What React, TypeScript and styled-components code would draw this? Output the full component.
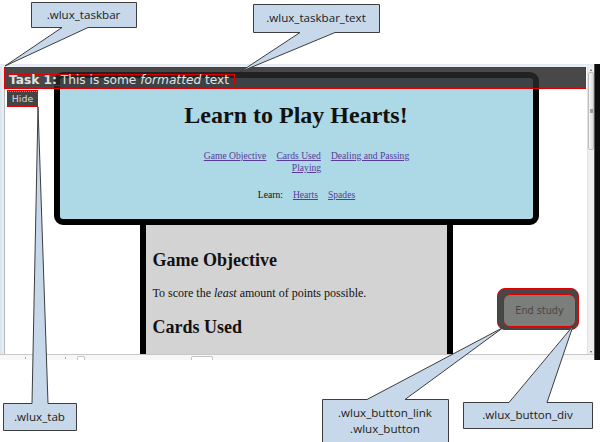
import React from "react";
import styled, { createGlobalStyle } from "styled-components";

const GlobalStyle = createGlobalStyle`
  html, body { margin: 0; padding: 0; background: #fff; }
  body { width: 600px; height: 442px; overflow: hidden; }
  #root { width: 600px; height: 442px; }
  * { box-sizing: border-box; }
`;

const Canvas = styled.div`
  position: relative;
  width: 600px;
  height: 442px;
  background: #fff;
  display: flex;
  flex-direction: column;
  overflow: hidden;
`;

const TopGap = styled.div`
  flex: none;
  height: 64px;
`;

const Frame = styled.div`
  flex: none;
  height: 296px;
  display: flex;
`;

const FrameMain = styled.div`
  flex: 1;
  min-width: 0;
  display: flex;
  flex-direction: column;
`;

const FrameTop = styled.div`
  flex: none;
  height: 3px;
  background: linear-gradient(#e2e8f0, #eef2f7);
`;

const FrameBody = styled.div`
  position: relative;
  flex: 1;
  min-height: 0;
  display: flex;
`;

const LeftEdge = styled.div`
  flex: none;
  width: 5px;
  background: linear-gradient(90deg, #d9e1ea 0, #e9eef4 3px);
  border-right: 1px solid #b3b8be;
`;

const Viewport = styled.div`
  flex: 1;
  min-width: 0;
  overflow: hidden;
  background: #fff;
  padding-top: 5px;
  font-family: "Liberation Serif", "Times New Roman", serif;
  color: #111;
`;

const Scrollbar = styled.div`
  flex: none;
  width: 7px;
  display: flex;
  flex-direction: column;
  background: #efefef;
  border-left: 1px solid #e2e2e2;
`;

const ScrollArrow = styled.div<{ $down?: boolean }>`
  flex: none;
  height: 5px;
  display: flex;
  align-items: center;
  justify-content: center;
  &::after {
    content: "";
    border-left: 1.5px solid transparent;
    border-right: 1.5px solid transparent;
    ${(p) => (p.$down ? "border-top: 2px solid #555;" : "border-bottom: 2px solid #555;")}
  }
`;

const ScrollThumb = styled.div`
  flex: none;
  height: 78px;
  margin: 0 0 0 0;
  border: 1px solid #bdbdbd;
  border-radius: 2px;
  background: linear-gradient(90deg, #f7f7f7, #dcdcdc);
  display: flex;
  align-items: center;
  justify-content: center;
  &::after {
    content: "";
    width: 3px;
    height: 4px;
    background: #9d9d9d;
  }
`;

const ScrollTrack = styled.div`
  flex: 1;
`;

const BlackEdge = styled.div`
  flex: none;
  width: 6px;
  background: #0d0d0d;
  border-left: 1px solid #555;
`;

const StatusStrip = styled.div`
  flex: none;
  height: 6px;
  border-top: 1px solid #c8c8c8;
  background: #f7f7f7;
  display: flex;
  align-items: flex-end;
`;

const StatusMark = styled.div<{ $left: number; $w: number }>`
  flex: none;
  margin-left: ${(p) => p.$left}px;
  width: ${(p) => p.$w}px;
  height: 4px;
  border: 1px solid #c4c4c4;
  border-bottom: none;
  border-radius: 2px 2px 0 0;
  background: #fff;
`;

const StatusDot = styled.div<{ $left: number }>`
  flex: none;
  margin-left: ${(p) => p.$left}px;
  width: 1px;
  height: 2px;
  margin-bottom: 1px;
  background: #aaa;
`;

/* ---------- page content ---------- */

const Header = styled.header`
  width: 485px;
  margin: 0 auto;
  border: 6px solid #000;
  border-radius: 9px;
  background: #add8e6;
  padding: 7px 0 18px;
  text-align: center;
`;

const Title = styled.h1`
  margin: 16px 0 21px;
  font-size: 24px;
  line-height: 28px;
  font-weight: bold;
`;

const NavRow = styled.nav<{ $gapTop?: number }>`
  width: 241px;
  margin: ${(p) => p.$gapTop ?? 0}px auto 0;
  padding-left: 21px;
  display: flex;
  flex-wrap: wrap;
  justify-content: center;
  column-gap: 10px;
  font-size: 9.6px;
  line-height: 12px;
`;

const NavLink = styled.a`
  color: #5a3b9c;
  text-decoration: underline;
  cursor: pointer;
`;

const NavLabel = styled.span`
  color: #111;
`;

const Body = styled.main`
  width: 313px;
  margin: 0 auto;
  border-left: 6px solid #000;
  border-right: 6px solid #000;
  background: #d3d3d3;
  padding: 10px 7px 60px;
`;

const SectionTitle = styled.h2`
  margin: 15px 0;
  font-size: 18px;
  line-height: 21px;
  font-weight: bold;
`;

const Para = styled.p`
  margin: 15px 0 17px;
  font-size: 12px;
  line-height: 14px;
`;

/* ---------- wlux overlay parts ---------- */

const Taskbar = styled.div`
  position: absolute;
  left: 4px;
  top: 0;
  width: 582px;
  height: 22px;
  border: 1px solid #e00000;
  background: rgba(40, 40, 40, 0.85);
  padding: 5px 0 0 2px;
  font-family: "DejaVu Sans", Verdana, sans-serif;
  font-size: 12.2px;
  color: #e2e2e2;
`;

const TaskbarText = styled.span`
  display: inline-block;
  height: 12px;
  line-height: 10px;
  border: 1px solid #e00000;
  padding: 0 5px 0 1px;
  white-space: nowrap;
`;

const Tab = styled.div`
  position: absolute;
  left: 7px;
  top: 23px;
  width: 31px;
  height: 17px;
  border: 1px solid #e00000;
`;

const TabButton = styled.div`
  height: 100%;
  background: #444;
  border-top: 1px dotted #9a9a9a;
  color: #dcdcdc;
  font-family: "DejaVu Sans", Verdana, sans-serif;
  font-size: 9.4px;
  line-height: 13px;
  text-align: center;
`;

const ButtonDiv = styled.div`
  position: absolute;
  left: 497px;
  top: 221px;
  width: 82px;
  height: 42px;
  padding: 5px 2px 2px 5px;
  border: 1px solid #e00000;
  border-radius: 8px;
  background: #474747;
`;

const ButtonLink = styled.a`
  display: flex;
  align-items: center;
  justify-content: center;
  width: 73px;
  height: 33px;
  border: 1px solid #e00000;
  border-radius: 7px;
  background: #7b7e7a;
  color: #474747;
  font-family: "DejaVu Sans", Verdana, sans-serif;
  font-size: 9.7px;
  text-decoration: none;
  cursor: pointer;
`;

/* ---------- callouts ---------- */

const CalloutLayer = styled.svg`
  position: absolute;
  left: 0;
  top: 0;
  width: 600px;
  height: 442px;
  pointer-events: none;
`;

const CalloutLabel = styled.div<{ $x: number; $y: number; $w: number; $h: number }>`
  position: absolute;
  left: ${(p) => p.$x}px;
  top: ${(p) => p.$y}px;
  width: ${(p) => p.$w}px;
  height: ${(p) => p.$h}px;
  display: flex;
  flex-direction: column;
  align-items: center;
  justify-content: center;
  font-family: "Open Sans", "DejaVu Sans", sans-serif;
  font-size: 11.6px;
  line-height: 16px;
  color: #1c1c1c;
  pointer-events: none;
`;

type Callout = {
  box: [number, number, number, number];
  base: [number, number];
  tip: [number, number];
  side: "top" | "bottom";
  lines: string[];
};

const callouts: Callout[] = [
  { box: [31, 2, 136, 27], base: [62, 88], tip: [5, 66], side: "bottom", lines: [".wlux_taskbar"] },
  { box: [253, 4, 379, 32], base: [300, 335], tip: [240, 72], side: "bottom", lines: [".wlux_taskbar_text"] },
  { box: [3, 403, 76, 430], base: [32, 48], tip: [38, 107], side: "top", lines: [".wlux_tab"] },
  { box: [322, 399, 448, 442], base: [367, 405], tip: [504, 327], side: "top", lines: [".wlux_button_link", ".wlux_button"] },
  { box: [463, 402, 592, 428], base: [509, 547], tip: [573, 326], side: "top", lines: [".wlux_button_div"] },
];

function shapePath(c: Callout): string {
  const [x0, y0, x1, y1] = c.box.map((v) => v + 0.5);
  const [b0, b1] = c.base;
  const [tx, ty] = c.tip;
  if (c.side === "bottom") {
    return `M${x0} ${y0}H${x1}V${y1}H${b1}L${tx} ${ty}L${b0} ${y1}H${x0}Z`;
  }
  return `M${x0} ${y0}H${b0}L${tx} ${ty}L${b1} ${y0}H${x1}V${y1}H${x0}Z`;
}

export default function App() {
  return (
    <>
      <GlobalStyle />
      <Canvas>
        <TopGap />
        <Frame>
          <FrameMain>
            <FrameTop />
            <FrameBody>
              <LeftEdge />
              <Viewport>
                <Header>
                  <Title>Learn to Play Hearts!</Title>
                  <NavRow>
                    <NavLink>Game Objective</NavLink>
                    <NavLink>Cards Used</NavLink>
                    <NavLink>Dealing and Passing</NavLink>
                    <NavLink>Playing</NavLink>
                  </NavRow>
                  <NavRow $gapTop={15}>
                    <NavLabel>Learn:</NavLabel>
                    <NavLink>Hearts</NavLink>
                    <NavLink>Spades</NavLink>
                  </NavRow>
                </Header>
                <Body>
                  <SectionTitle>Game Objective</SectionTitle>
                  <Para>
                    To score the <em>least</em> amount of points possible.
                  </Para>
                  <SectionTitle>Cards Used</SectionTitle>
                </Body>
              </Viewport>
              <Scrollbar>
                <ScrollArrow />
                <ScrollThumb />
                <ScrollTrack />
                <ScrollArrow $down />
              </Scrollbar>
              <Taskbar>
                <TaskbarText>
                  <b>Task 1:</b> This is some <i>formatted</i> text
                </TaskbarText>
              </Taskbar>
              <Tab>
                <TabButton>Hide</TabButton>
              </Tab>
              <ButtonDiv>
                <ButtonLink>End study</ButtonLink>
              </ButtonDiv>
            </FrameBody>
            <StatusStrip>
              <StatusDot $left={25} />
              <StatusDot $left={20} />
              <StatusDot $left={18} />
              <StatusMark $left={11} $w={8} />
              <StatusMark $left={106} $w={22} />
            </StatusStrip>
          </FrameMain>
          <BlackEdge />
        </Frame>
        <CalloutLayer viewBox="0 0 600 442">
          {callouts.map((c, i) => (
            <path key={i} d={shapePath(c)} fill="#c6d8ea" stroke="#3d3d3d" strokeWidth={1} />
          ))}
        </CalloutLayer>
        {callouts.map((c, i) => (
          <CalloutLabel
            key={i}
            $x={c.box[0]}
            $y={c.box[1]}
            $w={c.box[2] - c.box[0]}
            $h={c.box[3] - c.box[1]}
          >
            {c.lines.map((l) => (
              <span key={l}>{l}</span>
            ))}
          </CalloutLabel>
        ))}
      </Canvas>
    </>
  );
}
